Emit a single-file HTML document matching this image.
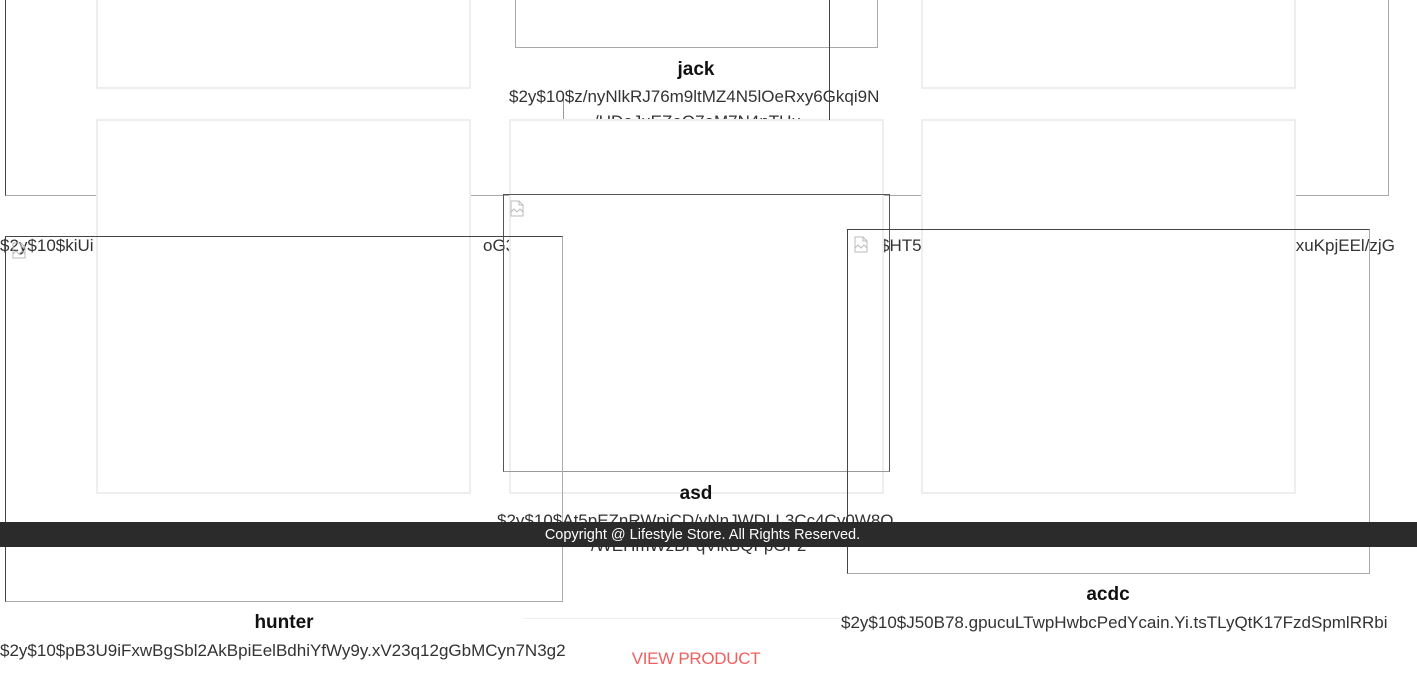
<!DOCTYPE html>
<html><head><meta charset="utf-8"><style>
*{margin:0;padding:0;box-sizing:border-box}
body{width:1417px;height:695px;overflow:hidden;background:#fff;position:relative;font-family:"Liberation Sans",sans-serif;color:#222}
.a{position:absolute}
.g{position:absolute;border:2px solid #eee;background:#fff}
.d{position:absolute;border:1px solid #555}
.l{position:absolute;border:1px solid #aaa}
.t{position:absolute;font-size:17px;white-space:nowrap;letter-spacing:0;color:#333}
.n{position:absolute;font-size:19px;font-weight:bold;color:#111;text-align:center}
.ic{position:absolute;width:14px;height:17px}
</style></head><body>
<div class="a" style="left:5px;top:-2px;width:1384px;height:198px;border:1px solid #aaa;border-left-color:#444;border-top:none"></div>
<div class="a" style="left:829px;top:0;width:1px;height:120px;background:#444"></div>
<div class="a" style="left:563px;top:95px;width:1px;height:25px;background:#999"></div>
<div class="t" style="left:0;top:236px">$2y$10$kiUi</div>
<div class="t" style="left:483px;top:236px">oG37c</div>
<div class="t" style="left:880px;top:236px">$HT5</div>
<div class="t" style="left:1291px;top:236px">/xuKpjEEl/zjG</div>
<div class="t" style="left:594px;top:112px">/UDeJuEZeQ7eM7N4nTUu</div>
<div class="g" style="left:96px;top:-10px;width:375px;height:99px"></div>
<div class="g" style="left:921px;top:-10px;width:375px;height:99px"></div>
<div class="g" style="left:96px;top:119px;width:375px;height:375px"></div>
<div class="g" style="left:509px;top:119px;width:375px;height:375px"></div>
<div class="g" style="left:921px;top:119px;width:375px;height:375px"></div>
<div class="l" style="left:515px;top:-2px;width:363px;height:50px;border-top:none"></div>
<div class="a" style="left:829px;top:0;width:1px;height:120px;background:#444"></div>
<div class="n" style="left:596px;top:59px;width:200px">jack</div>
<div class="t" style="left:509px;top:87px">$2y$10$z/nyNlkRJ76m9ltMZ4N5lOeRxy6Gkqi9N</div>
<div class="d" style="left:503px;top:194px;width:387px;height:278px;border-bottom-color:#999"></div>
<div class="a" style="left:5px;top:236px;width:558px;height:366px;border:1px solid #aaa;border-top-color:#444;border-left-color:#444"></div>
<div class="a" style="left:847px;top:229px;width:523px;height:345px;border:1px solid #aaa;border-top-color:#444;border-left-color:#444"></div>
<svg class="ic" style="left:510px;top:200px" viewBox="0 0 14 17"><path d="M1 1h8l4 4v11H1z M9 1v4h4 M1 12l3-3 3 3 3-3 3 3" fill="none" stroke="#bbb"/></svg>
<svg class="ic" style="left:12px;top:242px" viewBox="0 0 14 17"><path d="M1 1h8l4 4v11H1z M9 1v4h4 M1 12l3-3 3 3 3-3 3 3" fill="none" stroke="#bbb"/></svg>
<svg class="ic" style="left:854px;top:236px" viewBox="0 0 14 17"><path d="M1 1h8l4 4v11H1z M9 1v4h4 M1 12l3-3 3 3 3-3 3 3" fill="none" stroke="#bbb"/></svg>
<div class="n" style="left:596px;top:483px;width:200px">asd</div>
<div class="t" style="left:497px;top:511px">$2y$10$At5pEZnRWpiCD/yNnJWDLL3Cc4Cy0W8Q</div>
<div class="t" style="left:591px;top:536px">/WEHmWzBFqVlkBQFpGF2</div>
<div class="a" style="left:0;top:522px;width:1417px;height:25px;background:#2b2b2b;color:#fff;font-size:14.5px;text-align:center;line-height:26px"><span style="position:relative;left:-6px">Copyright @ Lifestyle Store. All Rights Reserved.</span></div>
<div class="a" style="left:523px;top:618px;width:317px;height:1px;background:#eee"></div>
<div class="n" style="left:184px;top:612px;width:200px">hunter</div>
<div class="t" style="left:0;top:641px">$2y$10$pB3U9iFxwBgSbl2AkBpiEelBdhiYfWy9y.xV23q12gGbMCyn7N3g2</div>
<div class="n" style="left:1008px;top:584px;width:200px">acdc</div>
<div class="t" style="left:841px;top:613px">$2y$10$J50B78.gpucuLTwpHwbcPedYcain.Yi.tsTLyQtK17FzdSpmlRRbi</div>
<div class="a" style="left:596px;top:649px;width:200px;text-align:center;color:#f0605f;font-size:17px;letter-spacing:-0.3px">VIEW PRODUCT</div>
</body></html>
